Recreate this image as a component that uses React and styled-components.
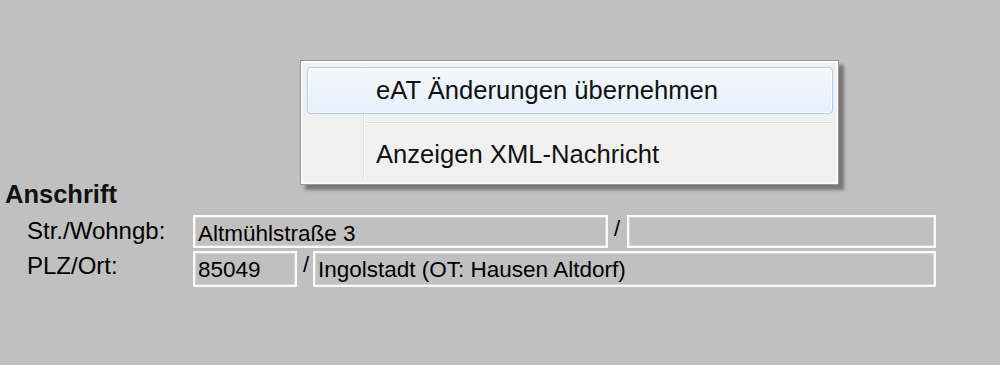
import React from 'react'
import styled, { createGlobalStyle } from 'styled-components'

const GlobalStyle = createGlobalStyle`
  html, body {
    margin: 0;
    padding: 0;
    background: #c0c0c0;
  }
  #root {
    width: 1000px;
    height: 365px;
  }
`

const Screen = styled.div`
  position: relative;
  width: 1000px;
  height: 365px;
  background: #c0c0c0;
  overflow: hidden;
  font-family: "Liberation Sans", Arial, sans-serif;
  color: #000;
`

const Section = styled.div`
  padding: 182px 0 0 5px;
`

const Title = styled.div`
  font-weight: bold;
  font-size: 25.5px;
  line-height: 25px;
  height: 27px;
  color: #111;
`

const Rows = styled.div`
  display: flex;
  flex-direction: column;
  gap: 3px;
  padding-left: 22px;
  margin-top: 6px;
`

const Row = styled.div`
  display: flex;
  align-items: stretch;
  height: ${p => p.h}px;
`

const Label = styled.div`
  width: 166px;
  font-size: 24px;
  line-height: 23px;
  padding-top: ${p => p.top}px;
`

const Field = styled.div`
  box-sizing: border-box;
  width: ${p => p.w}px;
  height: 100%;
  border: 2px solid #fbfbfb;
  box-shadow: inset 0 0 0 1px #d4d4d4;
  background: #c0c0c0;
  font-size: 22.5px;
  line-height: 22px;
  padding: 6px 0 0 3px;
  white-space: nowrap;
  overflow: hidden;
`

const Slash = styled.div`
  width: ${p => p.w}px;
  font-size: 22px;
  line-height: 22px;
  padding: 3px 0 0 ${p => p.pl}px;
  box-sizing: border-box;
`

const Menu = styled.div`
  position: absolute;
  left: 300px;
  top: 60px;
  width: 539px;
  box-sizing: border-box;
  padding: 6px 5px 6px 6px;
  background: #f0f0f0;
  border: 1px solid #979797;
  box-shadow: inset 0 0 0 2px #fafafa, 5px 5px 3px rgba(0, 0, 0, 0.38);
  font-family: "Liberation Sans", Arial, sans-serif;
  font-size: 25.6px;

  &::before {
    content: '';
    position: absolute;
    left: 62px;
    top: 5px;
    bottom: 5px;
    width: 1px;
    background: #e2e3e3;
    box-shadow: 1px 0 0 #ffffff;
  }
`

const Item = styled.div`
  position: relative;
  box-sizing: border-box;
  height: 47px;
  display: flex;
  align-items: center;
  padding-left: 68px;
  border-radius: 4px;
  border: 1px solid ${p => (p.active ? '#a9cdf3' : 'transparent')};
  background: ${p => (p.active ? 'linear-gradient(#f4f8fd, #e6effa)' : 'transparent')};
  box-shadow: ${p => (p.active ? 'inset 0 0 0 1px rgba(255,255,255,0.75)' : 'none')};
  color: #111;
  z-index: 1;
`

const Separator = styled.div`
  height: 17px;
  display: flex;
  align-items: center;
  padding-left: 59px;

  &::after {
    content: '';
    flex: 1;
    height: 1px;
    background: #e0e0e0;
    box-shadow: 0 1px 0 #ffffff;
  }
`

export default function App() {
  return (
    <>
      <GlobalStyle />
      <Screen>
        <Section>
          <Title>Anschrift</Title>
          <Rows>
            <Row h={33}>
              <Label top={4}>Str./Wohngb:</Label>
              <Field w={415}>Altmühlstraße 3</Field>
              <Slash w={19} pl={6}>/</Slash>
              <Field w={309} />
            </Row>
            <Row h={36}>
              <Label top={3}>PLZ/Ort:</Label>
              <Field w={104}>85049</Field>
              <Slash w={16} pl={6}>/</Slash>
              <Field w={623}>Ingolstadt (OT: Hausen Altdorf)</Field>
            </Row>
          </Rows>
        </Section>

        <Menu>
          <Item active>eAT Änderungen übernehmen</Item>
          <Separator />
          <Item>Anzeigen XML-Nachricht</Item>
        </Menu>
      </Screen>
    </>
  )
}
